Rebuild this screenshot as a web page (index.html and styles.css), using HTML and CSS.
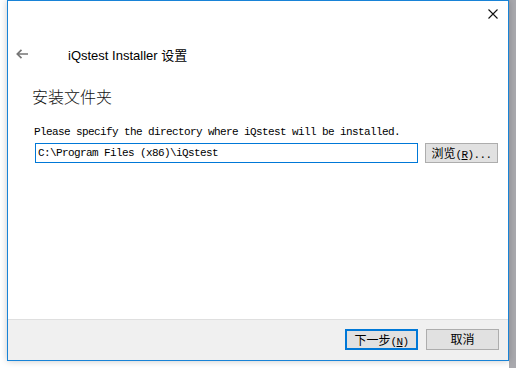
FILE: index.html
```html
<!DOCTYPE html>
<html lang="zh-CN">
<head>
  <meta charset="UTF-8">
  <title>iQstest Installer 设置</title>
  <link rel="stylesheet" href="styles.css">
</head>
<body>

  <!-- Installer window -->
  <div class="window">
    <div class="main">
      <!-- Close button -->
      <div class="top">
        <svg class="close" width="10" height="10" viewBox="0 0 10 10">
          <path d="M0.5 0.5 L9.5 9.5 M9.5 0.5 L0.5 9.5" stroke="#111" stroke-width="1.1" fill="none"/>
        </svg>
      </div>

      <!-- Back arrow and title -->
      <div class="nav">
        <svg class="back" width="12" height="10" viewBox="0 0 12 10">
          <path d="M5.5 0.8 L1.3 5 L5.5 9.2 M1.3 5 H12" stroke="#767676" stroke-width="1.7" fill="none"/>
        </svg>
        <span class="title">iQstest Installer 设置</span>
      </div>

      <!-- Page content -->
      <div class="content">
        <h1 class="heading">安装文件夹</h1>
        <p class="desc">Please specify the directory where iQstest will be installed.</p>
        <div class="path-row">
          <div class="path-input">C:\Program Files (x86)\iQstest</div>
          <button class="btn browse"><span class="cjk">浏览</span>(<u>R</u>)...</button>
        </div>
      </div>
    </div>

    <!-- Footer buttons -->
    <div class="footer">
      <button class="btn default"><span class="cjk">下一步</span>(<u>N</u>)</button>
      <button class="btn"><span class="cjk">取消</span></button>
    </div>
  </div>

</body>
</html>
```

FILE: styles.css
```css
/* Page and background */
body {
  margin: 0;
  width: 516px;
  height: 368px;
  overflow: hidden;
  background: linear-gradient(to right, #ffffff 509px, #a9a9ae 509px);
  font-family: "Liberation Sans", "Noto Sans CJK SC", sans-serif;
}

/* Window frame */
.window {
  margin-left: 7px;
  width: 502px;
  height: 361px;
  box-sizing: border-box;
  border: 1px solid #1883d7;
  background: #fff;
  display: flex;
  flex-direction: column;
  box-shadow: 0 0 7px rgba(0, 0, 0, 0.22);
}

.main {
  flex: 1;
}

/* Title area */
.top {
  height: 36px;
  box-sizing: border-box;
  display: flex;
  justify-content: flex-end;
  padding: 8px 10px 0 0;
}

.nav {
  height: 34px;
  display: flex;
  align-items: center;
  padding-left: 8px;
}

.back {
  margin-right: 40px;
}

.title {
  font-size: 13px;
  color: #000;
}

/* Content */
.content {
  padding-left: 26px;
}

.heading {
  margin: 14px 0 0 -2px;
  font-family: "Noto Sans CJK SC", sans-serif;
  font-weight: 300;
  font-size: 16px;
  line-height: 22px;
  color: #111;
}

.desc,
.path-input,
.btn {
  font-family: "Liberation Mono", "Noto Sans CJK SC", monospace;
  font-size: 11px;
  letter-spacing: -0.6px;
  color: #000;
}

.desc {
  margin: 17px 0 0;
  line-height: 16px;
}

.cjk {
  font-family: "Noto Sans CJK SC", sans-serif;
  font-size: 12px;
  letter-spacing: 0;
}

.path-row {
  display: flex;
  gap: 7px;
  margin-top: 3px;
  margin-left: 1px;
}

.path-input {
  width: 383px;
  height: 20px;
  box-sizing: border-box;
  border: 1px solid #0078d7;
  padding-left: 2px;
  line-height: 18px;
}

/* Buttons */
.btn {
  height: 20px;
  box-sizing: border-box;
  background: #e1e1e1;
  border: 1px solid #adadad;
  padding: 0;
  line-height: 18px;
  text-align: center;
}

.browse {
  width: 73px;
}

.btn u {
  text-underline-offset: 1px;
}

.footer {
  height: 41px;
  box-sizing: border-box;
  border-top: 1px solid #dfdfdf;
  background: #f0f0f0;
  display: flex;
  justify-content: flex-end;
  align-items: flex-start;
  gap: 8px;
  padding: 9px 9px 0 0;
}

.footer .btn {
  width: 73px;
  height: 21px;
}

.footer .default {
  width: 73px;
  border: 2px solid #0078d7;
  line-height: 17px;
}
```
